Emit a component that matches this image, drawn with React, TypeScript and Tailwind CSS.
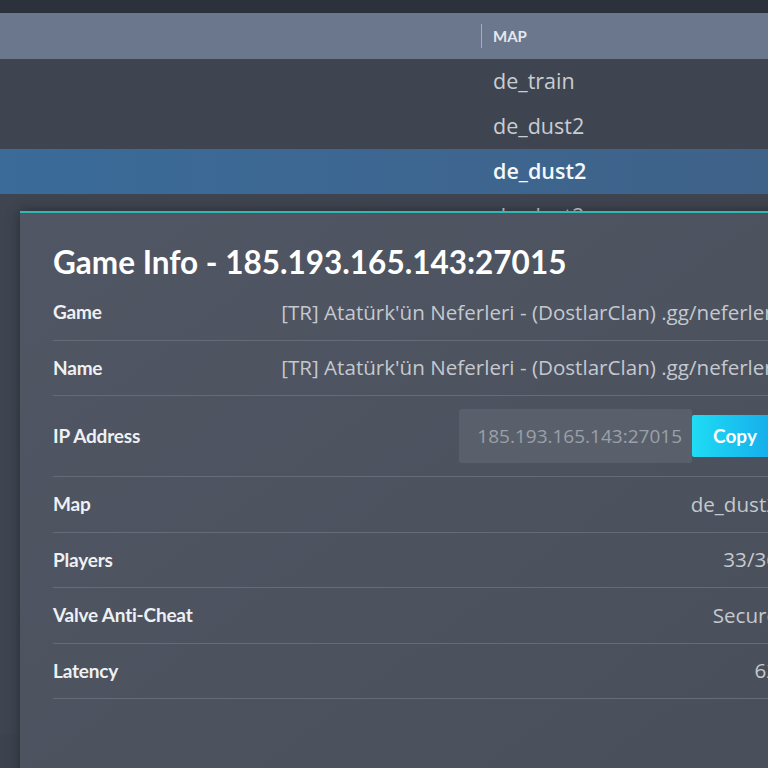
const MAPS = ["de_train", "de_dust2", "de_dust2", "de_dust2", "de_mirage", "de_inferno", "de_nuke", "de_vertigo", "de_ancient", "de_overpass", "de_anubis", "de_dust2", "de_train", "de_mirage", "de_nuke"];

const NAME = "[TR] Atatürk'ün Neferleri - (DostlarClan) .gg/neferleri";

interface InfoRow {
  label: string;
  value: string;
}

const ROWS_TOP: InfoRow[] = [
  { label: "Game", value: NAME },
  { label: "Name", value: NAME },
];

const ROWS_BOTTOM: InfoRow[] = [
  { label: "Map", value: "de_dust2" },
  { label: "Players", value: "33/36" },
  { label: "Valve Anti-Cheat", value: "Secure" },
  { label: "Latency", value: "62" },
];

function Row({ label, value }: InfoRow) {
  return (
    <div className="flex h-[55.5px] items-center justify-between border-b border-[#666c77]">
      <span className="font-['Lato'] text-[19px] font-bold tracking-[-0.2px] text-[#eef0f3]">{label}</span>
      <span className="whitespace-nowrap font-['Open_Sans'] text-[20.6px] text-[#c5c9cf]">{value}</span>
    </div>
  );
}

export default function App() {
  return (
    <div className="relative h-[768px] w-[768px] overflow-hidden bg-[#3d434e] font-['Open_Sans',sans-serif]">
      {/* server list behind */}
      <div className="h-[13px] bg-[#2c323c]" />
      <div className="flex h-[46px] items-center bg-[#6b778c]">
        <div className="ml-[481px] h-[24px] w-px bg-[#a3adbd]" />
        <span className="ml-[11px] font-['Lato'] text-[15px] font-bold text-[#e4e8ee]">MAP</span>
      </div>
      {MAPS.map((m, i) => (
        <div
          key={i}
          className={
            i === 2
              ? "flex h-[45px] items-center bg-gradient-to-r from-[#3a6b99] to-[#3f6289] pl-[493px] text-[21.5px] font-semibold text-[#f4f8fb]"
              : "flex h-[45px] items-center bg-[#3f4550] pl-[493px] text-[21.5px] text-[#c9cdd3]"
          }
        >
          {m}
        </div>
      ))}

      {/* dialog */}
      <div className="absolute left-[20px] top-[211px] h-[600px] w-[791px] border-t-2 border-[#33b7b3] bg-gradient-to-br from-[#505663] to-[#494f5a] px-[33px] shadow-[0_0_12px_rgba(0,0,0,0.4)]">
        <h1 className="pt-[29px] pb-[3px] font-['Lato'] text-[31.5px] font-bold leading-[40px] text-white">
          Game Info - 185.193.165.143:27015
        </h1>
        {ROWS_TOP.map((r) => (
          <Row key={r.label} {...r} />
        ))}
        <div className="flex h-[81px] items-center justify-between border-b border-[#666c77]">
          <span className="font-['Lato'] text-[19px] font-bold tracking-[-0.2px] text-[#eef0f3]">IP Address</span>
          <div className="flex items-center">
            <div className="flex h-[54px] w-[233px] items-center justify-end rounded-[3px] bg-[#5a606b] pr-[10px] text-[19px] text-[#9aa0a9]">
              185.193.165.143:27015
            </div>
            <button className="h-[42px] w-[86px] rounded-[2px] bg-gradient-to-r from-[#20dcf4] to-[#17a9ea] font-['Lato'] text-[19px] font-bold text-white">
              Copy
            </button>
          </div>
        </div>
        {ROWS_BOTTOM.map((r) => (
          <Row key={r.label} {...r} />
        ))}
      </div>
    </div>
  );
}
